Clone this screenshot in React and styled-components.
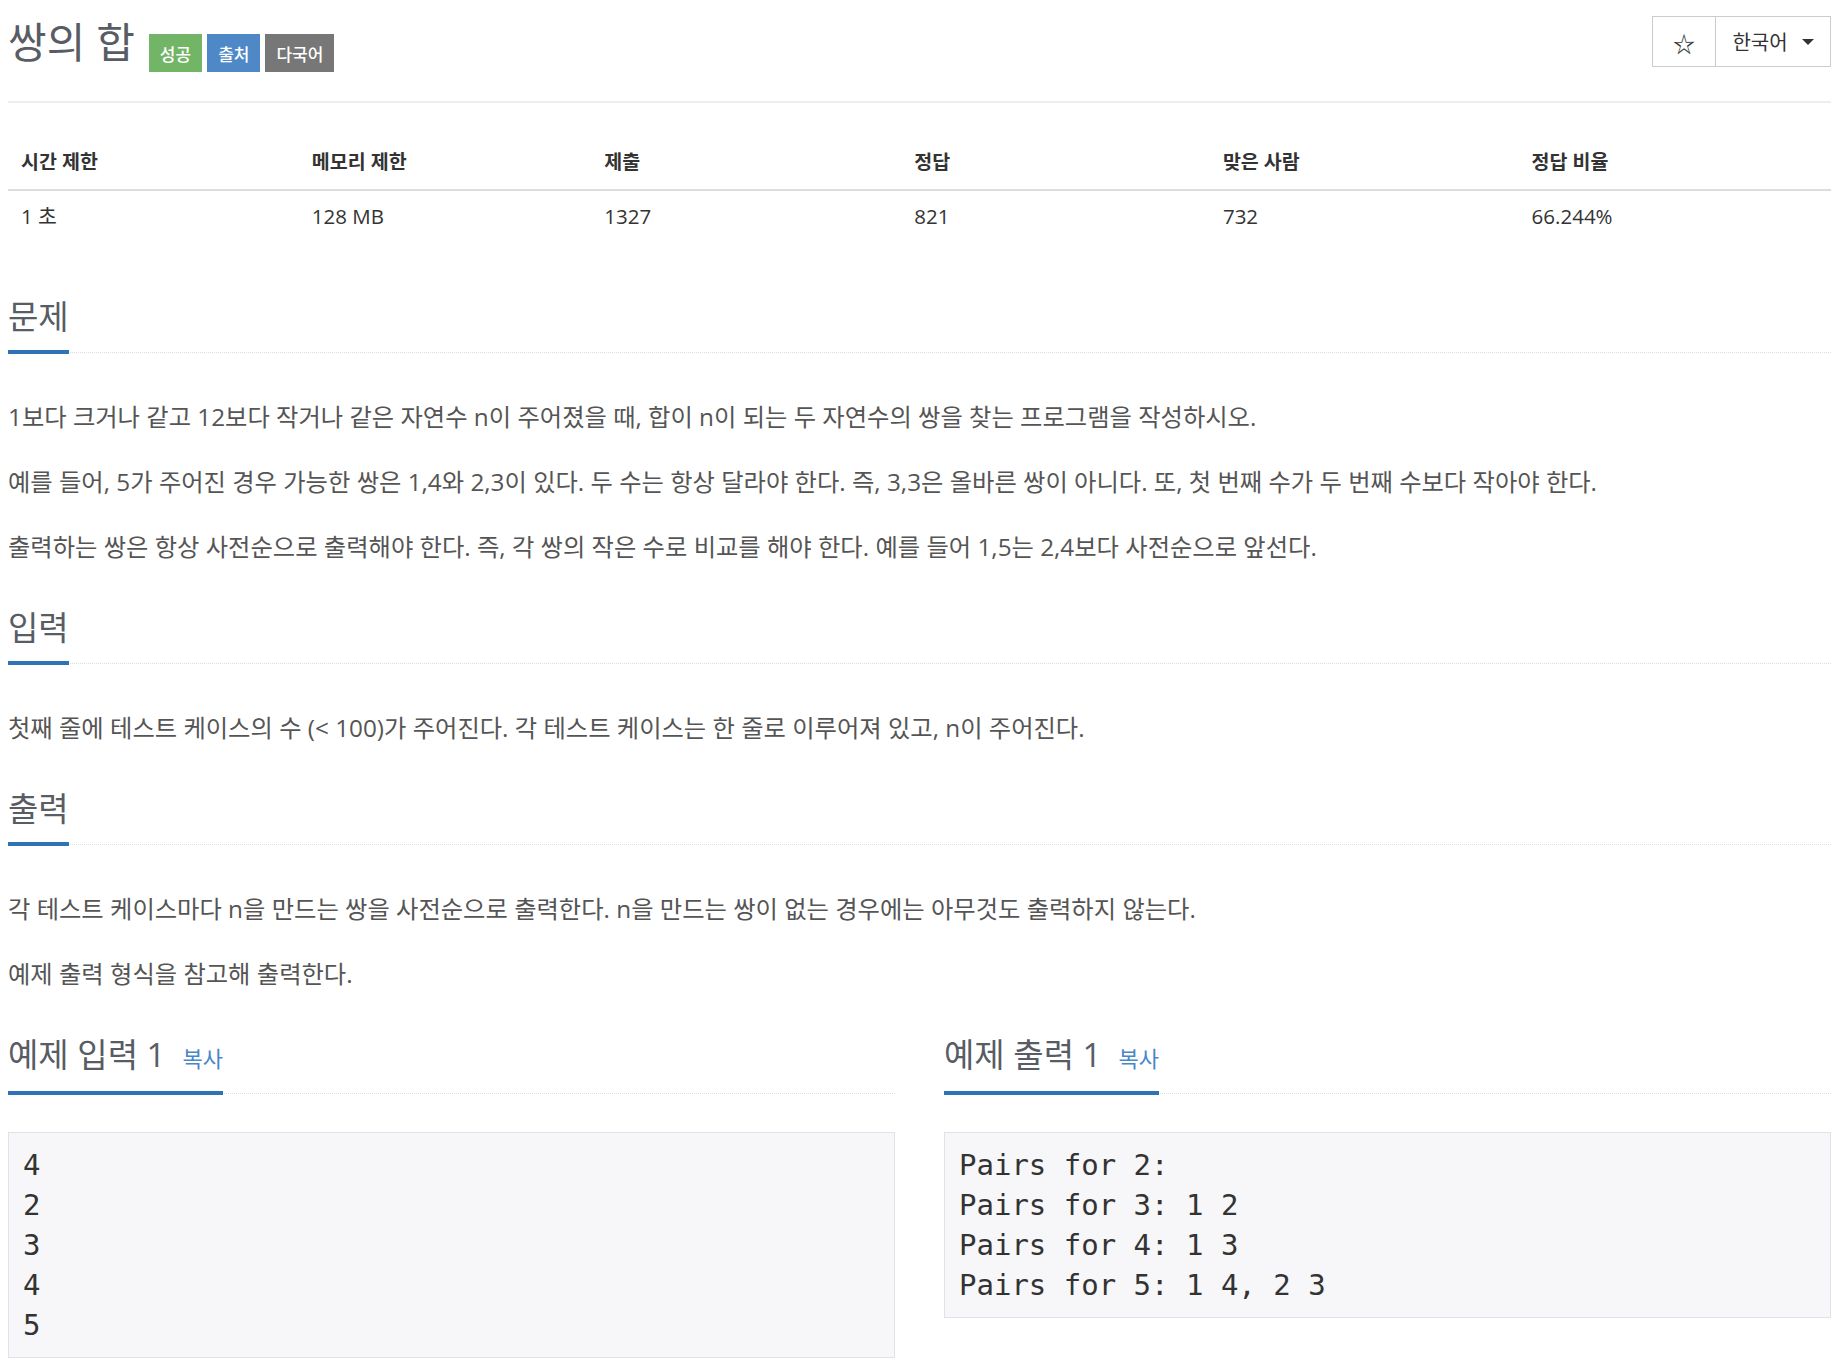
import React from "react";
import styled, { createGlobalStyle } from "styled-components";

const GlobalStyle = createGlobalStyle`
  body {
    margin: 0;
    background: #fff;
    font-family: "Open Sans", "Noto Sans CJK KR", sans-serif;
    color: #333;
  }
`;

const Page = styled.div`
  display: flex;
  flex-direction: column;
  padding: 0 17px 20px 8px;
`;

const Header = styled.div`
  display: flex;
  justify-content: space-between;
  align-items: flex-start;
  padding-top: 16px;
  padding-bottom: 29px;
  border-bottom: 2px solid #eee;
`;

const TitleWrap = styled.div`
  display: flex;
  align-items: flex-start;
  gap: 14px;
`;

const Title = styled.h1`
  margin: 0;
  font-size: 42px;
  line-height: 51px;
  font-weight: 400;
  color: #585c64;
`;

const Badges = styled.div`
  display: flex;
  gap: 5px;
  margin-top: 18px;
`;

const Badge = styled.span`
  display: inline-flex;
  align-items: center;
  height: 38px;
  padding: 0 11px;
  background: ${({ $color }) => $color};
  color: #fff;
  font-size: 17px;
  font-weight: 500;
`;

const BtnGroup = styled.div`
  display: flex;
  height: 51px;
  border: 1px solid #ccc;
  box-sizing: border-box;
`;

const Btn = styled.button`
  display: flex;
  align-items: center;
  justify-content: center;
  gap: 14px;
  width: ${({ $w }) => $w}px;
  background: #fff;
  border: none;
  border-left: ${({ $first }) => ($first ? "none" : "1px solid #ccc")};
  font-family: inherit;
  font-size: ${({ $fs }) => $fs || 20}px;
  color: #333;
  padding: 0;
`;

const Caret = styled.span`
  width: 0;
  height: 0;
  border-left: 6px solid transparent;
  border-right: 6px solid transparent;
  border-top: 6px solid #333;
`;

const Table = styled.table`
  width: 100%;
  margin-top: 32px;
  border-collapse: collapse;
  color: #333;
`;

const Th = styled.th`
  width: ${({ $w }) => $w}px;
  text-align: left;
  font-size: 19.5px;
  font-weight: 700;
  padding: 14px 13px;
  line-height: 26px;
  border-bottom: 2px solid #ddd;
`;

const Td = styled.td`
  padding: 12px 13px;
  font-size: 20.5px;
  line-height: 26px;
`;

const Sections = styled.div`
  display: flex;
  flex-direction: column;
  gap: 45.5px;
  margin-top: 58px;
`;

const Section = styled.section`
  display: flex;
  flex-direction: column;
  gap: ${({ $gap }) => $gap || 45.5}px;
`;

const Headline = styled.div`
  display: flex;
  align-items: flex-end;
  border-bottom: 1px dotted #ddd;
`;

const H2 = styled.h2`
  margin: 0 0 -2px 0;
  padding-bottom: 15px;
  font-size: 33px;
  line-height: 36px;
  font-weight: 400;
  color: #585c64;
  border-bottom: 4px solid #2f73b7;
`;

const Copy = styled.a`
  margin-left: 17px;
  font-size: 22px;
  color: #4a86c8;
  text-decoration: none;
`;

const Body = styled.div`
  display: flex;
  flex-direction: column;
  gap: 29px;
`;

const P = styled.p`
  margin: 0;
  font-size: 24.3px;
  line-height: 36px;
  color: #555;
`;

const Samples = styled.div`
  display: grid;
  grid-template-columns: 1fr 1fr;
  gap: 49px;
`;

const Pre = styled.pre`
  margin: 0;
  padding: 12px 14px;
  background: #f7f7f9;
  border: 1px solid #e1e1e8;
  font-family: "DejaVu Sans Mono", monospace;
  font-size: 29px;
  line-height: 40px;
  color: #333;
`;

const stats = [
  ["시간 제한", "1 초", 292],
  ["메모리 제한", "128 MB", 292],
  ["제출", "1327", 310],
  ["정답", "821", 310],
  ["맞은 사람", "732", 310],
  ["정답 비율", "66.244%", 309],
];

const Heading = ({ children, copy }) => (
  <Headline>
    <H2>
      {children}
      {copy && <Copy href="#">복사</Copy>}
    </H2>
  </Headline>
);

const App = () => {
  return (
    <Page>
      <GlobalStyle />
      <Header>
        <TitleWrap>
          <Title>쌍의 합</Title>
          <Badges>
            <Badge $color="#72b566">성공</Badge>
            <Badge $color="#4f88c6">출처</Badge>
            <Badge $color="#777">다국어</Badge>
          </Badges>
        </TitleWrap>
        <BtnGroup>
          <Btn $first $w={62} $fs={22}>☆</Btn>
          <Btn $w={115}>
            한국어 <Caret />
          </Btn>
        </BtnGroup>
      </Header>

      <Table>
        <thead>
          <tr>
            {stats.map(([h, , w]) => (
              <Th key={h} $w={w}>{h}</Th>
            ))}
          </tr>
        </thead>
        <tbody>
          <tr>
            {stats.map(([h, v]) => (
              <Td key={h}>{v}</Td>
            ))}
          </tr>
        </tbody>
      </Table>

      <Sections>
        <Section>
          <Heading>문제</Heading>
          <Body>
            <P>1보다 크거나 같고 12보다 작거나 같은 자연수 n이 주어졌을 때, 합이 n이 되는 두 자연수의 쌍을 찾는 프로그램을 작성하시오.</P>
            <P>예를 들어, 5가 주어진 경우 가능한 쌍은 1,4와 2,3이 있다. 두 수는 항상 달라야 한다. 즉, 3,3은 올바른 쌍이 아니다. 또, 첫 번째 수가 두 번째 수보다 작아야 한다.</P>
            <P>출력하는 쌍은 항상 사전순으로 출력해야 한다. 즉, 각 쌍의 작은 수로 비교를 해야 한다. 예를 들어 1,5는 2,4보다 사전순으로 앞선다.</P>
          </Body>
        </Section>

        <Section>
          <Heading>입력</Heading>
          <Body>
            <P>첫째 줄에 테스트 케이스의 수 (&lt; 100)가 주어진다. 각 테스트 케이스는 한 줄로 이루어져 있고, n이 주어진다.</P>
          </Body>
        </Section>

        <Section>
          <Heading>출력</Heading>
          <Body>
            <P>각 테스트 케이스마다 n을 만드는 쌍을 사전순으로 출력한다. n을 만드는 쌍이 없는 경우에는 아무것도 출력하지 않는다.</P>
            <P>예제 출력 형식을 참고해 출력한다.</P>
          </Body>
        </Section>

        <Samples>
          <Section $gap={38}>
            <Heading copy>예제 입력 1</Heading>
            <Pre>{"4\n2\n3\n4\n5"}</Pre>
          </Section>
          <Section $gap={38}>
            <Heading copy>예제 출력 1</Heading>
            <Pre>{"Pairs for 2:\nPairs for 3: 1 2\nPairs for 4: 1 3\nPairs for 5: 1 4, 2 3"}</Pre>
          </Section>
        </Samples>
      </Sections>
    </Page>
  );
};

export default App;
